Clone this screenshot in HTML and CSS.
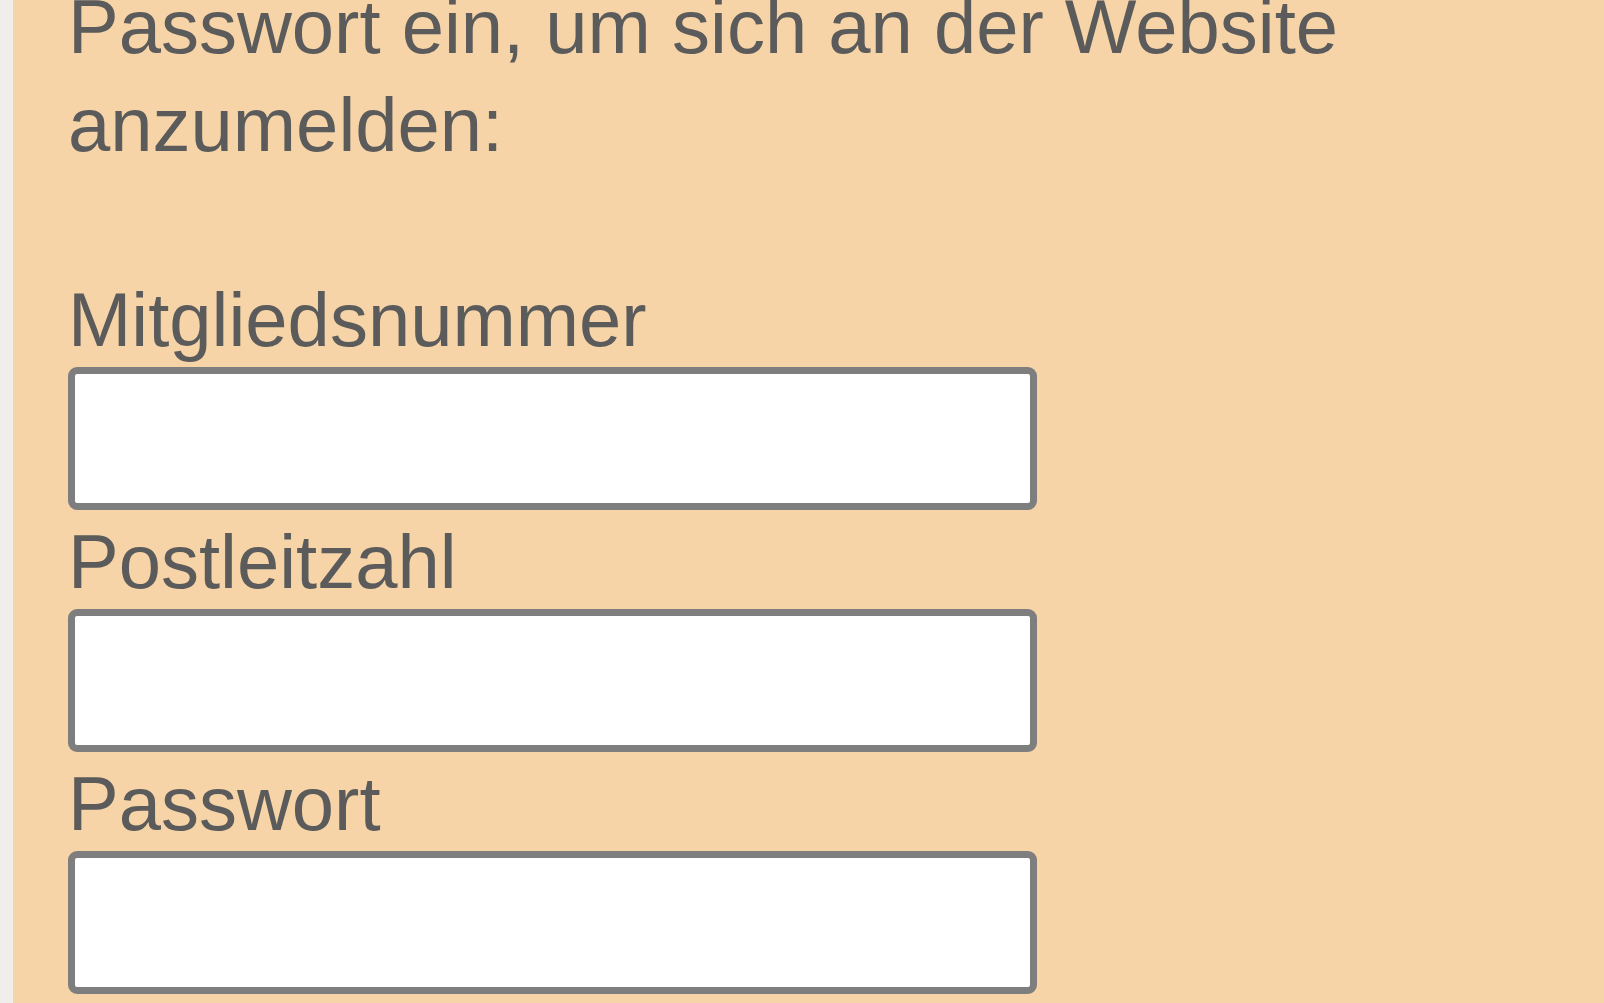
FILE: index.html
```html
<!DOCTYPE html>
<html lang="de">
<head>
  <meta charset="UTF-8" />
  <meta name="viewport" content="width=device-width, initial-scale=1.0"/>
  <title>Anmelden</title>
  <link rel="stylesheet" href="styles.css">
</head>
<body>
  <div class="page">
    <div class="sidebar"></div>
    <main class="login">
      <p class="intro">Passwort ein, um sich an der Website anzumelden:</p>
      <form class="login-form">
        <label for="member">Mitgliedsnummer</label>
        <input type="text" id="member">
        <label for="zip">Postleitzahl</label>
        <input type="text" id="zip">
        <label for="pass">Passwort</label>
        <input type="password" id="pass">
      </form>
    </main>
  </div>
</body>
</html>
```

FILE: styles.css
```css
body {
  font-family: "Liberation Sans", Arial, sans-serif;
  margin: 0;
  padding: 0;
  background: #f6d4a7;
  overflow: hidden;
}

.page {
  display: flex;
  min-height: 100vh;
}

.sidebar {
  width: 13px;
  background: #efeeea;
  flex-shrink: 0;
}

.login {
  flex: 1;
  padding: 0 60px 0 55px;
  color: #5b5b5b;
  font-size: 76px;
}

.intro {
  margin: -22px 0 98px;
  line-height: 98px;
}

.login-form label {
  display: block;
  line-height: 95px;
}

.login-form input {
  display: block;
  box-sizing: border-box;
  width: 969px;
  height: 143px;
  margin: 0 0 4px;
  border: 7px solid #7e7e7e;
  border-radius: 9px;
  background: #fff;
}
```
